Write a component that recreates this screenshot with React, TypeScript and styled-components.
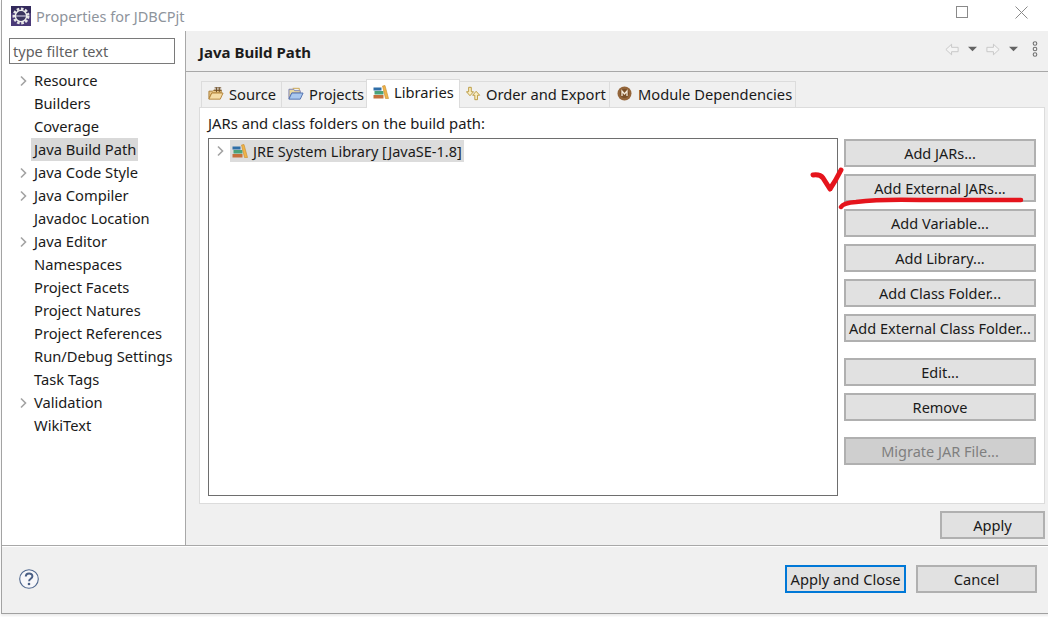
import React from "react";
import styled, { createGlobalStyle } from "styled-components";

const Global = createGlobalStyle`
  html, body { margin: 0; padding: 0; background: #fff; }
  body { font-family: "Noto Sans", "Open Sans", Arial, sans-serif; font-size: 14.7px; color: #1a1a1a; overflow: hidden; }
  * { box-sizing: border-box; }
`;

const Page = styled.div`
  position: relative;
  width: 1048px;
  height: 617px;
  overflow: hidden;
  background: #fff;
`;
const Win = styled.div`
  width: 1048px;
  height: 614px;
  margin-left: 1px;
  display: flex;
  flex-direction: column;
  border-left: 1px solid #a3a3a3;
  border-bottom: 1px solid #a0a0a0;
  box-shadow: 0 2px 2px rgba(0,0,0,0.08);
`;
const TitleBar = styled.div`
  height: 31px;
  flex: none;
  display: flex;
  align-items: center;
  padding-left: 9px;
  background: #fff;
`;
const Title = styled.span`
  margin-left: 5px;
  color: #8e949c;
  font-size: 14.5px;
  flex: 1;
`;
const WinButtons = styled.div`
  display: flex;
  align-items: center;
  margin-right: 21px;
  gap: 47px;
  margin-top: -7px;
`;
const Main = styled.div`
  flex: 1;
  display: flex;
  min-height: 0;
`;
const Sidebar = styled.div`
  width: 184px;
  flex: none;
  background: #fff;
  border-right: 1px solid #a8a8a8;
  padding: 7px 0 0 7px;
`;
const Filter = styled.div`
  width: 166px;
  height: 26px;
  border: 1px solid #7a7a7a;
  display: flex;
  align-items: center;
  padding-left: 3px;
  color: #5f5f5f;
  font-size: 14.5px;
`;
const TreeList = styled.div`
  margin-top: 5px;
  display: flex;
  flex-direction: column;
`;
const Row = styled.div`
  height: 23px;
  display: flex;
  align-items: center;
`;
const Twistie = styled.span`
  width: 22px;
  margin-left: 8px;
  padding-left: 2px;
  flex: none;
  display: flex;
  align-items: center;
  margin-right: -8px;
`;
const Label = styled.span<{ $sel?: boolean }>`
  height: 23px;
  line-height: 22px;
  padding: 0 2px 0 3px;
  white-space: nowrap;
  font-size: 14.7px;
  background: ${(p) => (p.$sel ? "#d9d9d9" : "transparent")};
`;
const Right = styled.div`
  flex: 1;
  min-width: 0;
  background: #f0f0f0;
  display: flex;
  flex-direction: column;
  padding-left: 13px;
`;
const Head = styled.div`
  height: 41px;
  flex: none;
  border-bottom: 1px solid #a8a8a8;
  margin-left: -13px;
  padding-left: 13px;
  display: flex;
  align-items: center;
  margin-bottom: 8px;
`;
const HeadTitle = styled.span`
  font-weight: 700;
  font-size: 15px;
  flex: 1;
  color: #1c1c1c;
  margin-top: 1px;
`;
const HeadTools = styled.div`
  display: flex;
  align-items: center;
  margin-right: 11px;
  gap: 9px;
  margin-top: -4px;
`;
const KebabSlot = styled.span`
  display: flex;
  margin-left: 5px;
`;
const Tabs = styled.div`
  display: flex;
  align-items: flex-end;
  height: 27px;
  padding-left: 3px;
  position: relative;
  z-index: 1;
`;
const Tab = styled.div<{ $active?: boolean; $w: number; $pad?: number; $gap?: number }>`
  width: ${(p) => p.$w}px;
  height: ${(p) => (p.$active ? 29 : 26)}px;
  margin-bottom: ${(p) => (p.$active ? -1 : 0)}px;
  padding-bottom: ${(p) => (p.$active ? 4 : 2)}px;
  border: 1px solid #dcdcdc;
  border-bottom: none;
  margin-left: -1px;
  background: ${(p) => (p.$active ? "#fff" : "#f0f0f0")};
  display: flex;
  align-items: center;
  padding-left: ${(p) => p.$pad ?? 6}px;
  gap: ${(p) => p.$gap ?? 5}px;
  white-space: nowrap;
`;
const Panel = styled.div`
  width: 846px;
  height: 397px;
  flex: none;
  background: #fff;
  border: 1px solid #dcdcdc;
  padding: 5px 8px 0 8px;
`;
const PanelLabel = styled.div`
  height: 24px;
  line-height: 20px;
  font-size: 14.8px;
`;
const PanelBody = styled.div`
  display: flex;
  margin-top: 1px;
`;
const Box = styled.div`
  width: 630px;
  height: 358px;
  flex: none;
  border: 1px solid #6e6e6e;
  padding: 1px 0 0 7px;
`;
const LibRow = styled.div`
  display: flex;
  align-items: center;
  height: 22px;
`;
const LibLabel = styled.span`
  display: flex;
  align-items: center;
  gap: 5px;
  height: 22px;
  padding: 0 2px;
  margin-left: 5px;
  font-size: 14.5px;
  background: #dcdcdc;
`;
const Buttons = styled.div`
  margin-left: 6px;
  display: flex;
  flex-direction: column;
  gap: 7px;
  padding-top: 1px;
  font-size: 14.5px;
`;
const Btn = styled.div<{ $disabled?: boolean; $w?: number; $primary?: boolean; $gap?: boolean }>`
  width: ${(p) => p.$w ?? 192}px;
  height: 28px;
  flex: none;
  display: flex;
  align-items: center;
  justify-content: center;
  background: ${(p) => (p.$disabled ? "#cfcfcf" : "#e1e1e1")};
  border: ${(p) => (p.$primary ? "2px solid #0078d7" : "2px solid #b0b0b0")};
  color: ${(p) => (p.$disabled ? "#7f7f7f" : "#1a1a1a")};
  margin-top: ${(p) => (p.$gap ? 9 : 0)}px;
  white-space: nowrap;
`;
const ApplyRow = styled.div`
  display: flex;
  justify-content: flex-end;
  height: 42px;
  padding: 7px 2px 0 0;
  margin-right: 2px;
`;
const Footer = styled.div`
  height: 68px;
  flex: none;
  background: #f0f0f0;
  border-top: 1px solid #a8a8a8;
  box-shadow: inset 0 1px 0 #fff;
  display: flex;
  align-items: center;
  padding: 0 12px 2px 17px;
  gap: 10px;
`;
const Spacer = styled.div`
  flex: 1;
`;
const Mark = styled.svg`
  position: absolute;
  left: 0;
  top: 0;
  pointer-events: none;
`;

const Chevron = () => (
  <svg width="9" height="12" viewBox="0 0 9 12">
    <path d="M2 1.500 L6.500 6 L2 10.500" fill="none" stroke="#a3a3a3" strokeWidth="1.600" />
  </svg>
);

const EclipseIcon = () => (
  <svg width="20" height="20" viewBox="0 0 20 20">
    <rect width="20" height="20" fill="#4a3a78" />
    <path d="M0 0h20v7H0z" fill="#332a5c" />
    <circle cx="10" cy="10" r="7.200" fill="none" stroke="#e6e6e6" strokeWidth="2.600" strokeDasharray="2.600 1.600" />
    <circle cx="10" cy="10" r="5.600" fill="#3b3560" stroke="#efefef" strokeWidth="1.400" />
    <path d="M5 10h10" stroke="#c9c4dc" strokeWidth="1.200" />
  </svg>
);

const SourceIcon = () => (
  <svg width="16" height="15" viewBox="0 0 17 15">
    <path d="M1 5h4l1-1h8v3H4L1 13z" fill="#e9c88a" stroke="#a97a30" strokeWidth="1" />
    <path d="M4 7h12l-3 6.500H1z" fill="#f5dca6" stroke="#b4843a" strokeWidth="1" />
    <path d="M7 1.500h7M6.500 4h8M9 1v5M12 1v5" stroke="#6b4a22" strokeWidth="1" fill="none" />
  </svg>
);

const ProjectIcon = () => (
  <svg width="16" height="15" viewBox="0 0 17 15">
    <path d="M1 3h5l1 1.500h6V7H4l-3 6z" fill="#e8d9a0" stroke="#7a7fb0" strokeWidth="1" />
    <path d="M4 7h12l-3 6.500H1z" fill="#a9c8ef" stroke="#4f6fae" strokeWidth="1" />
    <path d="M5 2h7v2" fill="none" stroke="#c9a24a" strokeWidth="1" />
  </svg>
);

const LibIcon = () => (
  <svg width="16" height="14" viewBox="0 0 16 14">
    <rect x="0.500" y="10" width="10" height="3.500" fill="#c4703c" />
    <rect x="1.500" y="6" width="9" height="3.500" fill="#4aa27a" />
    <rect x="0.500" y="2.500" width="8" height="3" fill="#2f6ea8" />
    <path d="M9.500 1 L12 0.500 L15.500 13.500 L12.500 13.500z" fill="#efb44a" stroke="#c8892a" strokeWidth="0.600" />
  </svg>
);

const OrderIcon = () => (
  <svg width="15" height="15" viewBox="0 0 17 16">
    <path d="M3 1h3v5h2.500L4.500 10.500 0.500 6H3z" fill="#fbeec2" stroke="#b59334" strokeWidth="1" />
    <path d="M10 15h3v-5h2.500l-4-4.500-4 4.500H10z" fill="#fbeec2" stroke="#b59334" strokeWidth="1" />
  </svg>
);

const ModuleIcon = () => (
  <svg width="15" height="15" viewBox="0 0 15 15">
    <circle cx="7.500" cy="7.500" r="7" fill="#93653a" />
    <circle cx="7.500" cy="7.500" r="4.500" fill="#7a5028" />
    <path d="M5 10V5l2.500 3L10 5v5" stroke="#f4ead9" strokeWidth="1.300" fill="none" />
  </svg>
);

const NavArrowLeft = () => (
  <svg width="14" height="13" viewBox="0 0 16 14">
    <path d="M7.500 1 L1 7 L7.500 13 V9.500 H15 V4.500 H7.500z" fill="#f4f4f4" stroke="#c4c4c4" strokeWidth="1" />
  </svg>
);
const NavArrowRight = () => (
  <svg width="14" height="13" viewBox="0 0 16 14">
    <path d="M8.500 1 L15 7 L8.500 13 V9.500 H1 V4.500 H8.500z" fill="#f4f4f4" stroke="#c4c4c4" strokeWidth="1" />
  </svg>
);
const Caret = () => (
  <svg width="9" height="6" viewBox="0 0 10 6">
    <path d="M0 0.500h10L5 5.500z" fill="#636363" />
  </svg>
);
const Kebab = () => (
  <svg width="6" height="16" viewBox="0 0 6 16">
    <circle cx="3" cy="2.500" r="1.800" fill="none" stroke="#707070" strokeWidth="1.100" />
    <circle cx="3" cy="8" r="1.800" fill="none" stroke="#707070" strokeWidth="1.100" />
    <circle cx="3" cy="13.500" r="1.800" fill="none" stroke="#707070" strokeWidth="1.100" />
  </svg>
);
const HelpIcon = () => (
  <svg width="20" height="20" viewBox="0 0 20 20">
    <circle cx="10" cy="10" r="9.300" fill="#f7f7fa" stroke="#50688f" strokeWidth="1.100" />
    <path d="M6.800 7.600c0-4.200 6.600-4.200 6.600-.3 0 2.600-3.300 2.400-3.300 5" fill="none" stroke="#4a5f85" strokeWidth="2" />
    <circle cx="10" cy="15" r="1.300" fill="#4a5f85" />
  </svg>
);

const items: [string, boolean][] = [
  ["Resource", true],
  ["Builders", false],
  ["Coverage", false],
  ["Java Build Path", false],
  ["Java Code Style", true],
  ["Java Compiler", true],
  ["Javadoc Location", false],
  ["Java Editor", true],
  ["Namespaces", false],
  ["Project Facets", false],
  ["Project Natures", false],
  ["Project References", false],
  ["Run/Debug Settings", false],
  ["Task Tags", false],
  ["Validation", true],
  ["WikiText", false],
];

export default function App() {
  return (
    <Page>
      <Global />
      <Win>
        <TitleBar>
          <EclipseIcon />
          <Title>Properties for JDBCPjt</Title>
          <WinButtons>
            <svg width="12" height="12" viewBox="0 0 12 12">
              <rect x="0.500" y="0.500" width="11" height="11" fill="none" stroke="#8a8a8a" />
            </svg>
            <svg width="13" height="13" viewBox="0 0 13 13">
              <path d="M0.500 0.500l12 12M12.500 0.500l-12 12" stroke="#8a8a8a" strokeWidth="1" />
            </svg>
          </WinButtons>
        </TitleBar>
        <Main>
          <Sidebar>
            <Filter>type filter text</Filter>
            <TreeList>
              {items.map(([name, hasKids]) => (
                <Row key={name}>
                  <Twistie>{hasKids && <Chevron />}</Twistie>
                  <Label $sel={name === "Java Build Path"}>{name}</Label>
                </Row>
              ))}
            </TreeList>
          </Sidebar>
          <Right>
            <Head>
              <HeadTitle>Java Build Path</HeadTitle>
              <HeadTools>
                <NavArrowLeft />
                <Caret />
                <NavArrowRight />
                <Caret />
                <KebabSlot><Kebab /></KebabSlot>
              </HeadTools>
            </Head>
            <Tabs>
              <Tab $w={81}><SourceIcon />Source</Tab>
              <Tab $w={86} $pad={6}><ProjectIcon />Projects</Tab>
              <Tab $w={94} $active><LibIcon />Libraries</Tab>
              <Tab $w={151}><OrderIcon />Order and Export</Tab>
              <Tab $w={187} $pad={7} $gap={6}><ModuleIcon />Module Dependencies</Tab>
            </Tabs>
            <Panel>
              <PanelLabel>JARs and class folders on the build path:</PanelLabel>
              <PanelBody>
                <Box>
                  <LibRow>
                    <Chevron />
                    <LibLabel><LibIcon />JRE System Library [JavaSE-1.8]</LibLabel>
                  </LibRow>
                </Box>
                <Buttons>
                  <Btn>Add JARs...</Btn>
                  <Btn>Add External JARs...</Btn>
                  <Btn>Add Variable...</Btn>
                  <Btn>Add Library...</Btn>
                  <Btn>Add Class Folder...</Btn>
                  <Btn>Add External Class Folder...</Btn>
                  <Btn $gap>Edit...</Btn>
                  <Btn>Remove</Btn>
                  <Btn $gap $disabled>Migrate JAR File...</Btn>
                </Buttons>
              </PanelBody>
            </Panel>
            <ApplyRow>
              <Btn $w={105}>Apply</Btn>
            </ApplyRow>
          </Right>
        </Main>
        <Footer>
          <HelpIcon />
          <Spacer />
          <Btn $w={121} $primary>Apply and Close</Btn>
          <Btn $w={121}>Cancel</Btn>
        </Footer>
      </Win>
      <Mark width="1048" height="617" viewBox="0 0 1048 617">
        <path d="M813 175 Q820 174 823 178 L830 189 Q836 180 841 170" fill="none" stroke="#e5141c" strokeWidth="5" strokeLinecap="round" strokeLinejoin="round" />
        <path d="M841 207 Q843 203 856 202 Q880 199 920 200 L1021 200" fill="none" stroke="#e5141c" strokeWidth="4.500" strokeLinecap="round" />
      </Mark>
    </Page>
  );
}
